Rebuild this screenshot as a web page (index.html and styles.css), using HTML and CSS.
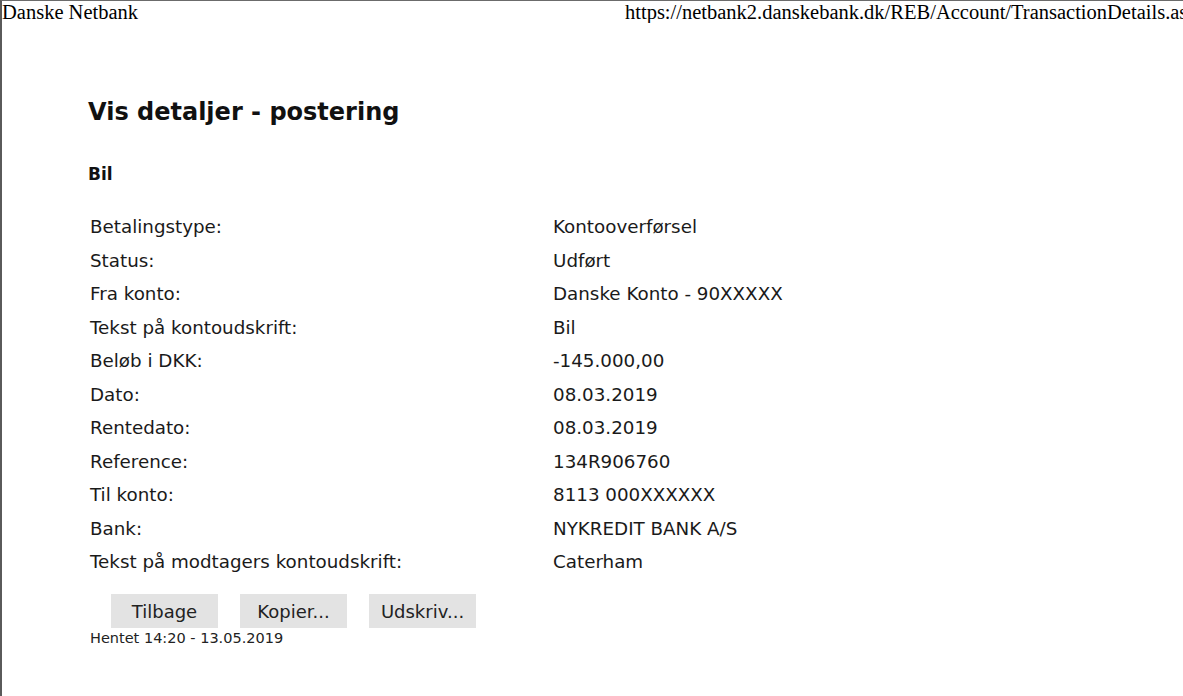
FILE: index.html
```html
<!DOCTYPE html>
<html lang="da">
<head>
    <meta charset="UTF-8">
    <title>Danske Netbank</title>
    <link rel="stylesheet" href="styles.css">
</head>
<body>

    <!-- Print header -->
    <div class="print-header">
        <span class="site">Danske Netbank</span>
        <span class="url">https://netbank2.danskebank.dk/REB/Account/TransactionDetails.aspx</span>
    </div>

    <div class="page">
        <h1>Vis detaljer - postering</h1>
        <h2>Bil</h2>

        <table class="details">
            <tr><td>Betalingstype:</td><td>Kontooverførsel</td></tr>
            <tr><td>Status:</td><td>Udført</td></tr>
            <tr><td>Fra konto:</td><td>Danske Konto - 90XXXXX</td></tr>
            <tr><td>Tekst på kontoudskrift:</td><td>Bil</td></tr>
            <tr><td>Beløb i DKK:</td><td>-145.000,00</td></tr>
            <tr><td>Dato:</td><td>08.03.2019</td></tr>
            <tr><td>Rentedato:</td><td>08.03.2019</td></tr>
            <tr><td>Reference:</td><td>134R906760</td></tr>
            <tr><td>Til konto:</td><td>8113 000XXXXXX</td></tr>
            <tr><td>Bank:</td><td>NYKREDIT BANK A/S</td></tr>
            <tr><td>Tekst på modtagers kontoudskrift:</td><td>Caterham</td></tr>
        </table>

        <div class="buttons">
            <button class="btn">Tilbage</button>
            <button class="btn">Kopier...</button>
            <button class="btn">Udskriv...</button>
        </div>

        <p class="fetched">Hentet 14:20 - 13.05.2019</p>
    </div>

</body>
</html>
```

FILE: styles.css
```css
/* General */
html, body {
    height: 100%;
}

body {
    margin: 0;
    background: #fff;
    color: #000;
    border-top: 1px solid #6b6b6b;
    border-left: 2px solid #5a5a5a;
    box-sizing: border-box;
    overflow: hidden;
    font-family: "DejaVu Sans", Verdana, sans-serif;
}

/* Print header line (url is clipped at the page edge, like the print) */
.print-header {
    display: flex;
    font-family: "Liberation Serif", "Times New Roman", serif;
    font-size: 20.5px;
    line-height: 22px;
    white-space: nowrap;
    overflow: hidden;
}

.print-header .site {
    width: 623px;
    flex-shrink: 0;
}

/* Content */
.page {
    padding: 75px 0 0 86px;
}

h1 {
    font-size: 24px;
    font-weight: bold;
    margin: 0 0 38px;
    color: #111;
}

h2 {
    font-size: 17px;
    font-weight: bold;
    margin: 0 0 26px;
    color: #111;
}

.details {
    border-collapse: collapse;
    font-size: 18.3px;
    color: #1a1a1a;
}

.details td {
    padding: 0 2px;
    height: 33.5px;
}

.details td:first-child {
    width: 459px;
}

/* Buttons */
.buttons {
    display: flex;
    gap: 22px;
    padding-left: 23px;
    margin-top: 15px;
}

.btn {
    font-family: "DejaVu Sans", Verdana, sans-serif;
    font-size: 18px;
    color: #222;
    background: #e3e3e3;
    border: none;
    width: 107px;
    height: 34px;
    padding: 2px 0 0;
}

.fetched {
    font-size: 14.5px;
    margin: 2px 0 0 2px;
    color: #222;
}
```
